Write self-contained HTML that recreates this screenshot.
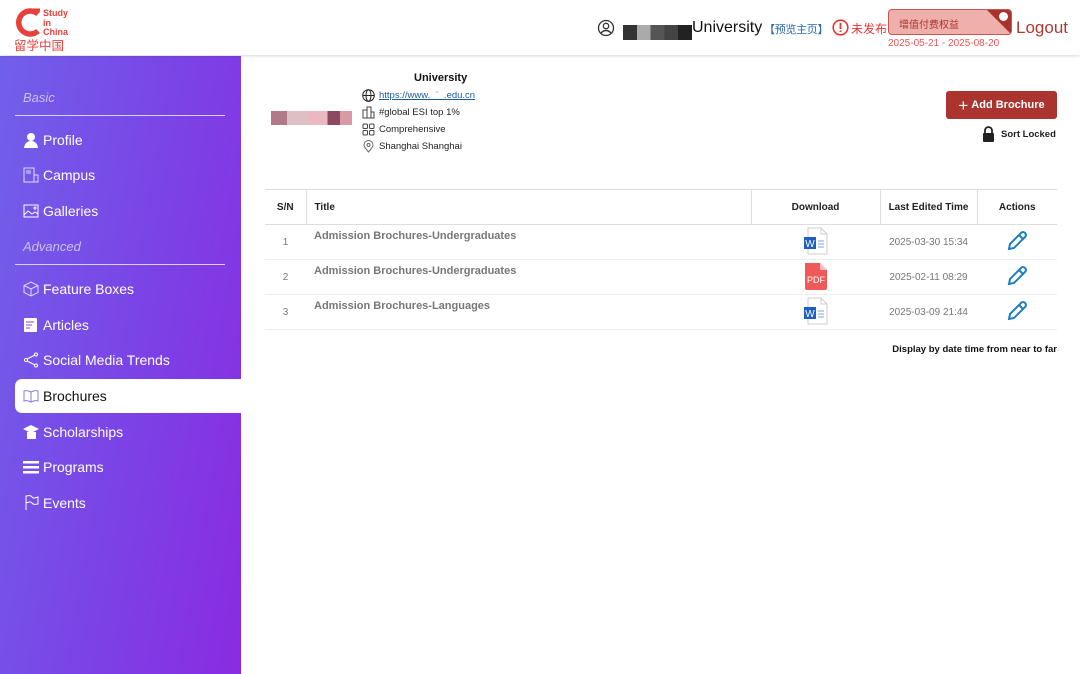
<!DOCTYPE html>
<html><head><meta charset="utf-8"><style>
*{margin:0;padding:0;box-sizing:border-box}
body{width:1080px;height:674px;overflow:hidden;background:#fff;font-family:"Liberation Sans","Noto Sans CJK SC",sans-serif;position:relative}
.hdr{position:absolute;left:0;top:0;width:1080px;height:55px;background:#fff;box-shadow:0 1px 3px rgba(0,0,0,.15);z-index:2}
.abs{position:absolute}
.side{position:absolute;left:0;top:56px;width:241px;height:618px;background:linear-gradient(100deg,#7160ea 0%,#7a45e6 50%,#8a2be2 100%)}
.lab{position:absolute;left:23px;font-size:13px;font-style:italic;color:#c9c2ee}
.line{position:absolute;left:15px;width:210px;height:1px;background:#d8d0f5}
.it{position:absolute;left:23px;font-size:14px;color:#fff;display:flex;align-items:center;height:20px}
.it svg{width:16px;height:16px;margin-right:4px}
.act{position:absolute;left:15px;top:379px;width:226px;height:34px;background:#fff;border-radius:7px 0 0 7px}
table{position:absolute;left:265px;top:189px;width:792px;border-collapse:collapse;font-size:10px}
td,th{border-bottom:1px solid #eee;height:35px}
th{font-weight:bold;color:#222;border-top:1px solid #ddd;border-bottom:1px solid #ddd}
th+th{border-left:1px solid #ddd}
td{color:#777;text-align:center;vertical-align:middle}
td.t{text-align:left;vertical-align:top;padding:5px 8px;font-weight:bold;font-size:11px;color:#777}
td.s{vertical-align:top;padding-top:12px}
</style></head><body>
<div class="hdr">
 <svg class="abs" style="left:14px;top:7px" width="30" height="30" viewBox="0 0 30 30"><path d="M24 7 A11.5 11.5 0 1 0 24 24" fill="none" stroke="#e8413c" stroke-width="5.5"/><path d="M17 3 L26 3" stroke="#e8413c" stroke-width="3"/></svg>
 <div class="abs" style="left:43px;top:9px;font-size:9px;line-height:9.5px;color:#e8413c;font-weight:bold">Study<br>in<br>China</div>
 <div class="abs" style="left:14px;top:35px;font-size:12.5px;color:#e8413c;letter-spacing:0px">留学中国</div>
 <svg class="abs" style="left:597px;top:19px" width="18" height="18" viewBox="0 0 18 18"><circle cx="9" cy="9" r="7.5" fill="none" stroke="#333" stroke-width="1.3"/><circle cx="9" cy="7" r="2.7" fill="none" stroke="#333" stroke-width="1.3"/><path d="M4 14 Q9 9 14 14" fill="none" stroke="#333" stroke-width="1.3"/></svg>
 <div class="abs" style="left:623px;top:25px;width:69px;height:15px;background:linear-gradient(90deg,#333 0 20%,#aaa 20% 40%,#555 40% 60%,#444 60% 80%,#222 80%)"></div>
 <div class="abs" style="left:692px;top:19px;font-size:16px;color:#111">University</div>
 <div class="abs" style="left:764px;top:21px;font-size:11px;color:#2a6aa8;letter-spacing:-0.3px">【预览主页】</div>
 <svg class="abs" style="left:832px;top:19px" width="17" height="17" viewBox="0 0 17 17"><circle cx="8.5" cy="8.5" r="7.3" fill="none" stroke="#e33" stroke-width="1.6"/><path d="M8.5 4v6M8.5 11.5v1.5" stroke="#e33" stroke-width="1.8"/></svg>
 <div class="abs" style="left:851px;top:20px;font-size:12px;color:#e33">未发布</div>
 <div class="abs" style="left:888px;top:9px;width:124px;height:26px;background:#efb0ab;border:1px solid #c9574f;border-radius:4px;overflow:hidden"><div style="position:absolute;right:0;top:0;width:0;height:0;border-left:24px solid transparent;border-top:24px solid #a8332c"></div><div style="position:absolute;left:10px;top:6px;font-size:10px;color:#a8332c">增值付费权益</div><div style="position:absolute;right:3px;top:2px;width:9px;height:9px;border-radius:50%;background:#fff"></div></div>
 <div class="abs" style="left:888px;top:38px;font-size:10px;color:#e55">2025-05-21 - 2025-08-20</div>
 <div class="abs" style="left:1016px;top:18px;font-size:17px;color:#b03a33">Logout</div>
</div>
<div class="side">
</div>
<div class="lab" style="top:90px">Basic</div>
<div class="line" style="top:115px"></div>
<div class="it" style="top:130px"><svg viewBox="0 0 16 16"><circle cx="8" cy="5" r="4" fill="#fff"/><path d="M1 16 Q2 9 8 9 Q14 9 15 16Z" fill="#fff"/></svg>Profile</div>
<div class="it" style="top:165px"><svg viewBox="0 0 16 16" fill="none" stroke="#e0dafb"><rect x="1" y="1" width="10" height="14"/><rect x="11" y="8" width="4" height="7"/><path d="M3 4h5M3 6h5"/></svg>Campus</div>
<div class="it" style="top:201px"><svg viewBox="0 0 16 16" fill="none" stroke="#fff"><rect x="1" y="2" width="14" height="12"/><path d="M1 12l4-4 4 3 3-2 3 2"/><circle cx="12" cy="5" r="1"/></svg>Galleries</div>
<div class="lab" style="top:239px">Advanced</div>
<div class="line" style="top:264px"></div>
<div class="it" style="top:279px"><svg viewBox="0 0 16 16" fill="none" stroke="#e0dafb"><path d="M8 1l7 3.5v7L8 15l-7-3.5v-7z M1 4.5L8 8l7-3.5M8 8v7"/></svg>Feature Boxes</div>
<div class="it" style="top:315px"><svg viewBox="0 0 16 16"><rect x="1" y="1" width="13" height="14" rx="1" fill="#fff"/><path d="M3 5h8M3 8h6M3 11h4" stroke="#7a50e6"/></svg>Articles</div>
<div class="it" style="top:350px"><svg viewBox="0 0 16 16" fill="none" stroke="#fff"><circle cx="3" cy="8" r="1.5"/><circle cx="13" cy="2.5" r="1.5"/><circle cx="13" cy="13.5" r="1.5"/><path d="M4 7l8-4M4 9l8 4"/></svg>Social Media Trends</div>
<div class="act"></div>
<div class="it" style="top:386px;color:#111"><svg viewBox="0 0 16 16" fill="none" stroke="#8a7ce0"><path d="M1 3q3-1 7 1v10q-4-2-7-1zM15 3q-3-1-7 1v10q4-2 7-1z"/></svg>Brochures</div>
<div class="it" style="top:422px"><svg viewBox="0 0 16 16" fill="#fff"><path d="M8 1l8 4-8 4-8-4z"/><rect x="4" y="8" width="9" height="7"/></svg>Scholarships</div>
<div class="it" style="top:457px"><svg viewBox="0 0 16 16" fill="#fff"><rect x="0" y="2" width="16" height="2.5"/><rect x="0" y="7" width="16" height="2.5"/><rect x="0" y="12" width="16" height="2.5"/></svg>Programs</div>
<div class="it" style="top:493px"><svg viewBox="0 0 16 16" fill="none" stroke="#fff"><path d="M3 15V1q5-1 6 1t6 0v7q-5 1-6-1t-6 0"/></svg>Events</div>

<div class="abs" style="left:271px;top:111px;width:81px;height:14px;background:linear-gradient(90deg,#b07a88 0 20%,#dcc0c4 20% 45%,#e9b8c0 45% 70%,#8c4a60 70% 85%,#d99aa6 85%)"></div>
<div class="abs" style="left:414px;top:72px;font-size:11px;font-weight:bold;color:#111">University</div>
<svg class="abs" style="left:362px;top:89px" width="13" height="13" viewBox="0 0 13 13" fill="none" stroke="#222"><circle cx="6.5" cy="6.5" r="5.8"/><ellipse cx="6.5" cy="6.5" rx="2.5" ry="5.8"/><path d="M1 6.5h11"/></svg>
<div class="abs" style="left:379px;top:90px;font-size:9.5px;color:#1a5a9a;text-decoration:underline">https://www.&nbsp;&nbsp;¨&nbsp;&nbsp;.edu.cn</div>
<svg class="abs" style="left:362px;top:106px" width="13" height="13" viewBox="0 0 13 13" fill="none" stroke="#444"><rect x="1" y="4" width="4" height="8"/><rect x="5" y="1" width="4" height="11"/><rect x="9" y="6" width="3" height="6"/></svg>
<div class="abs" style="left:379px;top:107px;font-size:9.5px;color:#222">#global ESI top 1%</div>
<svg class="abs" style="left:362px;top:123px" width="13" height="13" viewBox="0 0 13 13" fill="none" stroke="#444"><rect x="1" y="1" width="4.5" height="4.5" rx="1"/><rect x="7.5" y="1" width="4.5" height="4.5" rx="1"/><rect x="1" y="7.5" width="4.5" height="4.5" rx="1"/><rect x="7.5" y="7.5" width="4.5" height="4.5" rx="1"/></svg>
<div class="abs" style="left:379px;top:124px;font-size:9.5px;color:#222">Comprehensive</div>
<svg class="abs" style="left:363px;top:140px" width="11" height="13" viewBox="0 0 11 13" fill="none" stroke="#666"><path d="M5.5 12Q1 7 1 5a4.5 4.5 0 0 1 9 0q0 2-4.5 7z"/><circle cx="5.5" cy="5" r="1.5"/></svg>
<div class="abs" style="left:379px;top:141px;font-size:9.5px;color:#222">Shanghai Shanghai</div>

<div class="abs" style="left:946px;top:91px;width:111px;height:28px;background:#ab342e;border-radius:3px;color:#fff;font-size:11px;font-weight:bold;display:flex;align-items:center;justify-content:center"><span style="font-size:17px;font-weight:normal;margin-right:3px;line-height:1">+</span>Add Brochure</div>
<svg class="abs" style="left:982px;top:126px" width="13" height="16" viewBox="0 0 13 16"><path d="M3 7V4.5a3.5 3.5 0 0 1 7 0V7" fill="none" stroke="#222" stroke-width="1.8"/><rect x="1" y="7" width="11" height="9" rx="1" fill="#222"/></svg>
<div class="abs" style="left:1001px;top:129px;font-size:9.5px;font-weight:bold;color:#222">Sort Locked</div>

<table>
<tr><th style="width:41px">S/N</th><th style="width:445px;text-align:left;padding-left:8px">Title</th><th style="width:129px">Download</th><th style="width:97px">Last Edited Time</th><th>Actions</th></tr>
<tr><td class="s">1</td><td class="t">Admission Brochures-Undergraduates</td><td><svg width="26" height="28" viewBox="0 0 26 28"><path d="M5 1h13l6 6v20H5z" fill="#fff" stroke="#ccc"/><path d="M18 1v6h6" fill="none" stroke="#ccc"/><rect x="1" y="10" width="12" height="12" fill="#1f5fbf"/><text x="7" y="20" font-size="10" fill="#fff" text-anchor="middle" font-family="Liberation Sans">W</text><path d="M15 14h6M15 17h6M15 20h6" stroke="#7aa6e0"/></svg></td><td>2025-03-30 15:34</td><td><svg width="24" height="24" viewBox="0 0 24 24" fill="none" stroke="#1e7ec4" stroke-width="2"><path d="M4 20l1-5L16 4q2-2 4 0t0 4L9 19zM14 6l4 4"/></svg></td></tr>
<tr><td class="s">2</td><td class="t">Admission Brochures-Undergraduates</td><td><svg width="26" height="28" viewBox="0 0 26 28"><path d="M2 1h15l7 7v18a2 2 0 0 1-2 2H4a2 2 0 0 1-2-2z" fill="#ef5a58"/><path d="M17 1v7h7" fill="#fbc"/><text x="13" y="21" font-size="9" fill="#fff" text-anchor="middle" font-family="Liberation Sans">PDF</text></svg></td><td>2025-02-11 08:29</td><td><svg width="24" height="24" viewBox="0 0 24 24" fill="none" stroke="#1e7ec4" stroke-width="2"><path d="M4 20l1-5L16 4q2-2 4 0t0 4L9 19zM14 6l4 4"/></svg></td></tr>
<tr><td class="s">3</td><td class="t">Admission Brochures-Languages</td><td><svg width="26" height="28" viewBox="0 0 26 28"><path d="M5 1h13l6 6v20H5z" fill="#fff" stroke="#ccc"/><path d="M18 1v6h6" fill="none" stroke="#ccc"/><rect x="1" y="10" width="12" height="12" fill="#1f5fbf"/><text x="7" y="20" font-size="10" fill="#fff" text-anchor="middle" font-family="Liberation Sans">W</text><path d="M15 14h6M15 17h6M15 20h6" stroke="#7aa6e0"/></svg></td><td>2025-03-09 21:44</td><td><svg width="24" height="24" viewBox="0 0 24 24" fill="none" stroke="#1e7ec4" stroke-width="2"><path d="M4 20l1-5L16 4q2-2 4 0t0 4L9 19zM14 6l4 4"/></svg></td></tr>
</table>
<div class="abs" style="right:23px;top:344px;font-size:9.5px;font-weight:bold;color:#111">Display by date time from near to far</div>
</body></html>
